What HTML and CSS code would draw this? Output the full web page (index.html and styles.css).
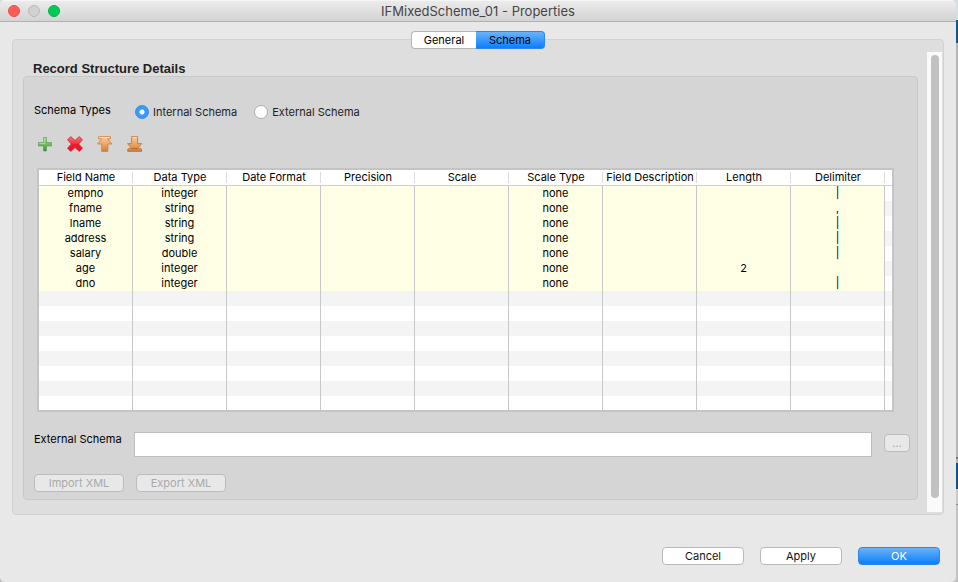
FILE: index.html
```html
<!DOCTYPE html>
<html lang="en">
<head>
<meta charset="utf-8">
<title>IFMixedScheme_01 - Properties</title>
<link rel="stylesheet" href="styles.css">
</head>
<body>
<div class="window">
  <header class="titlebar">
    <div class="lights">
      <button class="light close" type="button" aria-label="Close"></button>
      <button class="light minimize" type="button" aria-label="Minimize" disabled></button>
      <button class="light zoom" type="button" aria-label="Zoom"></button>
    </div>
    <h1>IFMixedScheme_01 - Properties</h1>
  </header>

  <nav class="tabs">
    <button class="tab" type="button">General</button><button class="tab active" type="button">Schema</button>
  </nav>

  <main class="panel">
    <section class="content">
      <h2>Record Structure Details</h2>
      <div class="group">
        <div class="types">
          <span class="label">Schema Types</span>
          <label class="choice"><input type="radio" name="schema" checked>Internal Schema</label>
          <label class="choice"><input type="radio" name="schema">External Schema</label>
        </div>

        <div class="tools">
          <button class="tool" type="button" aria-label="Add">
            <svg width="16" height="16" viewBox="0 0 16 16">
              <defs><linearGradient id="green" x1="0" y1="0" x2="0" y2="1"><stop offset="0" stop-color="#a5d88c"/><stop offset=".5" stop-color="#74bd62"/><stop offset="1" stop-color="#3c8a44"/></linearGradient></defs>
              <path d="M6.5 1.5h3v5h5v3.5h-5v5h-3v-5h-5v-3.5h5z" fill="url(#green)" stroke="#4c9148" stroke-opacity=".7" stroke-width=".8" stroke-linejoin="round"/>
              <path d="M7.3 2.5v5h-5" fill="none" stroke="#c2e8a8" stroke-opacity=".7"/>
            </svg>
          </button>
          <button class="tool" type="button" aria-label="Delete">
            <svg width="16" height="16" viewBox="0 0 16 16">
              <defs><linearGradient id="red" x1="0" y1="0" x2="0" y2="1"><stop offset="0" stop-color="#f4756c"/><stop offset=".45" stop-color="#f23840"/><stop offset=".5" stop-color="#ed1c2c"/><stop offset="1" stop-color="#ef1226"/></linearGradient></defs>
              <path d="M3.7.6 8 4.4 12.3.6l3.2 3.2L11.6 8l3.9 4.2-3.2 3.2L8 11.6l-4.3 3.8-3.2-3.2L4.4 8 .5 3.8z" fill="url(#red)" stroke="#cf2430" stroke-width=".8" stroke-linejoin="round"/>
            </svg>
          </button>
          <button class="tool" type="button" aria-label="Move up">
            <svg width="16" height="16" viewBox="0 0 16 16">
              <defs><linearGradient id="orange" x1="0" y1="0" x2="0" y2="1"><stop offset="0" stop-color="#f8ca9f"/><stop offset=".5" stop-color="#eda663"/><stop offset="1" stop-color="#d47d35"/></linearGradient></defs>
              <path d="M1.5.6h12v2.2h-2.8l4.2 5.2h-4v7.4H4.6V8H.5l4.2-5.2H1.5z" fill="url(#orange)" stroke="#c98145" stroke-width=".8" stroke-linejoin="round"/>
              <path d="M2.5 1.5h10" stroke="#fde2c4" stroke-width=".8"/>
            </svg>
          </button>
          <button class="tool" type="button" aria-label="Move down">
            <svg width="16" height="16" viewBox="0 0 16 16">
              <path d="M4.6.6h6v7h4.2l-4.2 4.8h3l1 .8v2.2H.7v-2.2l1-.8h3L.5 7.6h4.1z" fill="url(#orange)" stroke="#b97238" stroke-width=".8" stroke-linejoin="round"/>
              <path d="M5.4 1.4h4.4" stroke="#fde2c4" stroke-width=".8"/>
              <path d="M4.8 12.6h5.6" stroke="#a7622b" stroke-width=".8"/>
            </svg>
          </button>
        </div>

        <div class="grid">
          <table>
            <colgroup><col span="9"><col class="filler"></colgroup>
            <thead>
              <tr><th>Field Name</th><th>Data Type</th><th>Date Format</th><th>Precision</th><th>Scale</th><th>Scale Type</th><th>Field Description</th><th>Length</th><th>Delimiter</th><th></th></tr>
            </thead>
            <tbody>
              <tr class="data"><td>empno</td><td>integer</td><td></td><td></td><td></td><td>none</td><td></td><td></td><td>|</td><td></td></tr>
              <tr class="data"><td>fname</td><td>string</td><td></td><td></td><td></td><td>none</td><td></td><td></td><td>,</td><td></td></tr>
              <tr class="data"><td>lname</td><td>string</td><td></td><td></td><td></td><td>none</td><td></td><td></td><td>|</td><td></td></tr>
              <tr class="data"><td>address</td><td>string</td><td></td><td></td><td></td><td>none</td><td></td><td></td><td>|</td><td></td></tr>
              <tr class="data"><td>salary</td><td>double</td><td></td><td></td><td></td><td>none</td><td></td><td></td><td>|</td><td></td></tr>
              <tr class="data"><td>age</td><td>integer</td><td></td><td></td><td></td><td>none</td><td></td><td>2</td><td></td><td></td></tr>
              <tr class="data"><td>dno</td><td>integer</td><td></td><td></td><td></td><td>none</td><td></td><td></td><td>|</td><td></td></tr>
              <tr><td></td><td></td><td></td><td></td><td></td><td></td><td></td><td></td><td></td><td></td></tr>
              <tr><td></td><td></td><td></td><td></td><td></td><td></td><td></td><td></td><td></td><td></td></tr>
              <tr><td></td><td></td><td></td><td></td><td></td><td></td><td></td><td></td><td></td><td></td></tr>
              <tr><td></td><td></td><td></td><td></td><td></td><td></td><td></td><td></td><td></td><td></td></tr>
              <tr><td></td><td></td><td></td><td></td><td></td><td></td><td></td><td></td><td></td><td></td></tr>
              <tr><td></td><td></td><td></td><td></td><td></td><td></td><td></td><td></td><td></td><td></td></tr>
              <tr><td></td><td></td><td></td><td></td><td></td><td></td><td></td><td></td><td></td><td></td></tr>
              <tr><td></td><td></td><td></td><td></td><td></td><td></td><td></td><td></td><td></td><td></td></tr>
            </tbody>
          </table>
        </div>

        <div class="external">
          <label class="label" for="external">External Schema</label>
          <input id="external" type="text">
          <button class="btn browse" type="button" disabled>...</button>
        </div>

        <div class="xml">
          <button class="btn" type="button" disabled>Import XML</button>
          <button class="btn" type="button" disabled>Export XML</button>
        </div>
      </div>
    </section>
    <div class="scrollbar"><div class="thumb"></div></div>
  </main>

  <footer class="actions">
    <button class="btn" type="button">Cancel</button>
    <button class="btn" type="button">Apply</button>
    <button class="btn primary" type="button">OK</button>
  </footer>
</div>
</body>
</html>
```
FILE: styles.css
```css
* { box-sizing: border-box; }

body {
  margin: 0;
  height: 100vh;
  padding-right: 2px;
  font: 11px/15px Inter, "Liberation Sans", sans-serif;
  color: #000;
  /* strip of the desktop behind the window */
  background: linear-gradient(#d5dfe0 0 20px, #12588f 20px 43px, #b4b4b4 43px 457px, #777 457px 459px, #b4b4b4 459px 463px, #12508a 463px 489px, #c8c8c8 489px 504px, #888 504px 505px, #c2c2c2 505px);
}

button, input { font: inherit; margin: 0; }

.window {
  height: 100%;
  display: flex;
  flex-direction: column;
  overflow: hidden;
  border-radius: 5px;
  background: #e8e8e8;
}

.titlebar {
  display: flex;
  align-items: center;
  height: 22px;
  border-top: 1px solid #f5f5f5;
  border-bottom: 1px solid #b1b1b1;
  background: linear-gradient(#ebebeb, #d3d3d3);
}
.titlebar h1 {
  flex: 1;
  margin: 0 60px 0 0;
  text-align: center;
  font-size: 13px;
  font-weight: normal;
  line-height: 16px;
  color: #454545;
}
.lights { display: flex; gap: 8px; width: 60px; padding-left: 8px; }
.light {
  width: 12px;
  height: 12px;
  padding: 0;
  border: 1px solid;
  border-radius: 50%;
}
.close { background: #ff5b57; border-color: #e2504c; }
.minimize { background: #d1d1d1; border-color: #b9b9b9; }
.zoom { background: #00cb57; border-color: #00b048; }

.tabs {
  display: flex;
  justify-content: center;
  margin-top: 9px;
  position: relative;
}
.tab {
  width: 65px;
  height: 18px;
  padding: 0;
  line-height: 16px;
  border: 1px solid #b4b4b4;
  border-right: 0;
  border-radius: 4px 0 0 4px;
  background: #fff;
}
.tab.active {
  width: 69px;
  border: 1px solid #2f86e8;
  border-left: 0;
  border-radius: 0 4px 4px 0;
  background: linear-gradient(#6bb3f9, #0a7ffc);
}

.panel {
  flex: 1;
  min-height: 0;
  display: flex;
  margin: -10px 12px 0;
  padding: 12px 1px 2px 10px;
  border: 1px solid #d2d2d2;
  border-radius: 4px;
  background: #dedede;
}
.content {
  flex: 1;
  min-width: 0;
  display: flex;
  flex-direction: column;
  margin: 9px 9px 12px 0;
}
h2 {
  margin: 0;
  padding-left: 10px;
  font: bold 13px/15px "Liberation Sans", sans-serif;
  color: #222;
}
.group {
  flex: 1;
  min-height: 0;
  display: flex;
  flex-direction: column;
  padding: 26px 7px 7px 10px;
  border: 1px solid #c9c9c9;
  border-radius: 4px;
  background: #d5d5d5;
}
.label { width: 100px; }

.types { display: flex; align-items: flex-start; height: 17px; }
.types .label { width: 101px; }
.choice {
  display: flex;
  align-items: flex-start;
  gap: 4px;
  margin: 2px 17px 0 0;
  color: #222;
}
input[type="radio"] {
  appearance: none;
  width: 14px;
  height: 14px;
  border: 1px solid #aeaeae;
  border-radius: 50%;
  background: #fff;
}
input[type="radio"]:checked {
  border-color: #2c8df0;
  background: radial-gradient(circle, #fff 0 2px, #3899f7 3px);
}

.tools { display: flex; gap: 14px; padding: 16px 0 0 3px; }
.tool { display: flex; width: 16px; height: 16px; padding: 0; border: 0; background: none; }

.grid {
  flex: 1;
  min-height: 0;
  overflow: hidden;
  margin: 16px 16px 0 3px;
  border: 2px solid #c4c4c4;
  background: #fff;
}
table { width: 100%; table-layout: fixed; border-collapse: separate; border-spacing: 0; }
.filler { width: 7px; }
th, td { padding: 0; text-align: center; white-space: nowrap; }
th {
  height: 16px;
  font-weight: normal;
  line-height: 15px;
  border-bottom: 1px solid #cfcfcf;
  background: linear-gradient(#dcdcdc, #dcdcdc) right center / 1px 11px no-repeat;
}
td { height: 15px; border-right: 1px solid #c8c8c8; }
th:last-child { background: none; }
td:last-child { border-right: 0; }
tbody tr:nth-child(even) { background: #f4f4f4; }
.data td:not(:last-child) { background: #ffffe6; }

.external { display: flex; align-items: flex-start; margin-top: 20px; }
.external input {
  flex: 1;
  min-width: 0;
  height: 25px;
  border: 1px solid #bdbdbd;
  background: #fff;
}
.btn {
  width: 82px;
  height: 18px;
  padding: 0;
  line-height: 16px;
  color: #111;
  border: 1px solid #bababa;
  border-radius: 4px;
  background: #fff;
}
.btn:disabled { color: #aaa; background: #e8e8e8; border-color: #bcbcbc; }
.btn.browse { width: 26px; margin: 2px 0 0 12px; }
.xml { display: flex; gap: 12px; margin-top: 17px; }
.xml .btn { width: 90px; }
.btn.primary {
  color: #fff;
  border-color: #2f86e8;
  background: linear-gradient(#6bb3f9, #0a7ffc);
}

.scrollbar { width: 15px; padding: 3px 3px 14px 4px; background: #fafafa; }
.thumb { height: 100%; border-radius: 4px; background: #c1c1c1; }

.actions {
  display: flex;
  justify-content: flex-end;
  gap: 16px;
  padding: 32px 16px 17px;
}
```
